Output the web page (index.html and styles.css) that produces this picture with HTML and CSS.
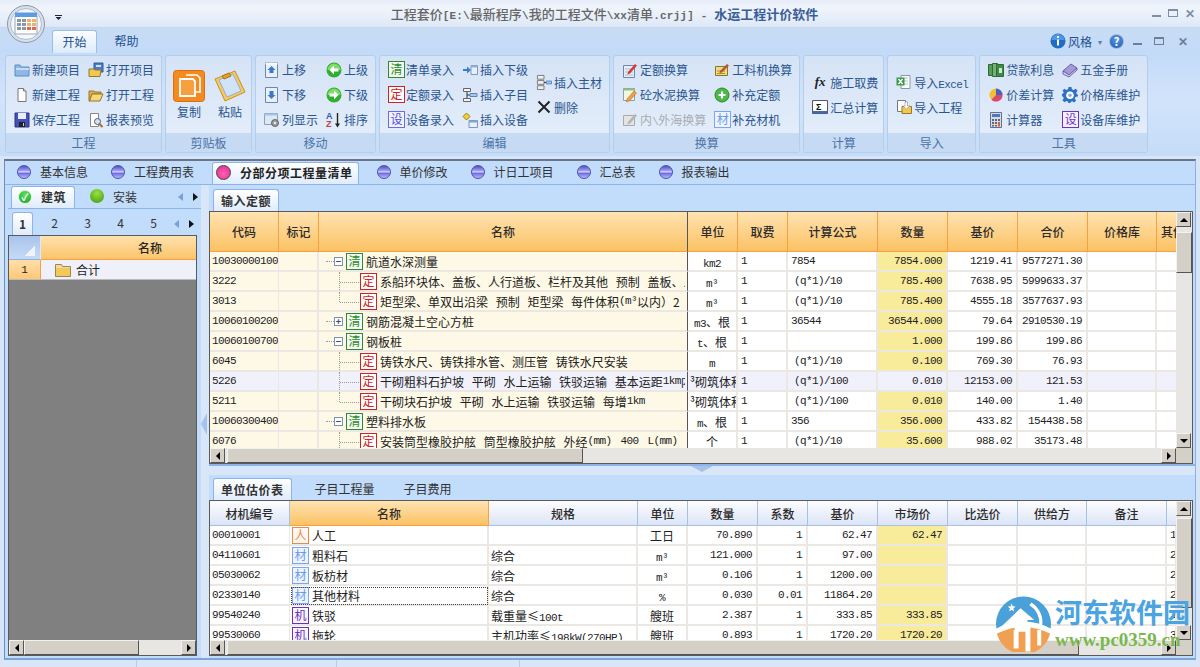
FILE: index.html
```html
<!DOCTYPE html>
<html lang="zh-CN">
<head>
    <meta charset="UTF-8">
    <title>水运工程计价软件</title>
    <link rel="stylesheet" href="styles.css">
</head>
<body>
<svg class="icon-defs" aria-hidden="true">
    <symbol id="i-folder" viewBox="0 0 16 16"><path d="M1 3h5l1 2h8v9H1z" fill="#8fb8e6" stroke="#5f8cc0"/><path d="M2 6h13v2H2z" fill="#c4dcf6"/></symbol>
    <symbol id="i-doc" viewBox="0 0 16 16"><path d="M4 1.500h5.500l2.500 2.500v10.500H4z" fill="#fff" stroke="#777"/><path d="M9.500 1.500V4H12" fill="#ddd" stroke="#777"/></symbol>
    <symbol id="i-save" viewBox="0 0 16 16"><path d="M1 1h14v14H1z" fill="#4450b8" stroke="#2c3488"/><path d="M4 1h8v6H4z" fill="#e8ecff"/><path d="M5 10h6v5H5z" fill="#222"/><path d="M9 11h1v3H9z" fill="#ccc"/></symbol>
    <symbol id="i-open" viewBox="0 0 16 16"><path d="M6 1h9v9H6z" fill="#4a7cc8" stroke="#2f5a9c"/><path d="M8 3h5v2H8z" fill="#cfe0f6"/><path d="M1 7h5l1 1h6l-1 6.500H1z" fill="#f2c850" stroke="#96782a"/></symbol>
    <symbol id="i-openf" viewBox="0 0 16 16"><path d="M1 4h5l1 1h6v2H4l-2 7H1z" fill="#d8b050" stroke="#96782a"/><path d="M4 7h11l-3 7H1.500z" fill="#f6d878" stroke="#96782a"/></symbol>
    <symbol id="i-preview" viewBox="0 0 16 16"><path d="M2.500 1.500h8v13h-8z" fill="#fff" stroke="#888"/><circle cx="9.500" cy="9.500" r="3" fill="#cfe4f8" stroke="#557"/><path d="M11.500 12l3 3" stroke="#a07030" stroke-width="2"/></symbol>
    <symbol id="i-up" viewBox="0 0 16 16"><path d="M1.500 .5h12v15h-12z" fill="#e8f0fb" stroke="#6c88b0"/><path d="M1.500 .5h12v2h-12z" fill="#fff"/><path d="M7.500 4l4 4H9.500v3h-4V8h-2z" fill="#3c78cc"/></symbol>
    <symbol id="i-down" viewBox="0 0 16 16"><path d="M1.500 .5h12v15h-12z" fill="#e8f0fb" stroke="#6c88b0"/><path d="M5.500 4h4v4h2l-4 4-4-4h2z" fill="#3c78cc"/></symbol>
    <symbol id="i-cols" viewBox="0 0 16 16"><path d="M.5 1.500h13v11H.5z" fill="#dce8f6" stroke="#88a0c0"/><path d="M.5 1.500h13v2H.5z" fill="#a8c4e8"/><circle cx="11" cy="11" r="3.500" fill="#999" stroke="#666"/><circle cx="11" cy="11" r="1.200" fill="#eee"/></symbol>
    <symbol id="i-left" viewBox="0 0 16 16"><circle cx="8" cy="8" r="7.500" fill="#2fae2f"/><path d="M1.500 8a6.500 6.500 0 0 1 13 0z" fill="#7fdc6a"/><path d="M3.500 8l4.500-4.500V6.500h4.500v3H8v3z" fill="#fff"/></symbol>
    <symbol id="i-right" viewBox="0 0 16 16"><circle cx="8" cy="8" r="7.500" fill="#2fae2f"/><path d="M1.500 8a6.500 6.500 0 0 1 13 0z" fill="#7fdc6a"/><path d="M12.500 8L8 3.500V6.500H3.500v3H8v3z" fill="#fff"/></symbol>
    <symbol id="i-sort" viewBox="0 0 16 16"><text x="0" y="7" class="svg-tx" fill="#3060b0">A</text><text x="0" y="15" class="svg-tx" fill="#c04040">Z</text><path d="M11.500 1v12" stroke="#222" stroke-width="1.400"/><path d="M9 11.500h5L11.500 15.500z" fill="#222"/></symbol>
    <symbol id="i-insnext" viewBox="0 0 16 16"><path d="M9 3.500h6.500v9H9z" fill="#e8f0fb" stroke="#7d97bd"/><path d="M9 3.500h6.500v2H9z" fill="#8fb0e0"/><path d="M1 7h4V4.500L9 8l-4 3.500V9H1z" fill="#3f7ad0"/></symbol>
    <symbol id="i-inschild" viewBox="0 0 16 16"><path d="M1.500 1.500h7v3h-7zM1.500 11.500h7v3h-7z" fill="#f4f4f4" stroke="#666"/><path d="M5 5v6M5 8h3" stroke="#333"/><path d="M8 6.500h7v3H8z" fill="#a8c8f0" stroke="#5a84c0"/></symbol>
    <symbol id="i-insdev" viewBox="0 0 16 16"><path d="M4.500 1l3.500 3.500L4.500 8 1 4.500z" fill="#f4cf30" stroke="#a08010"/><path d="M7 8.500h8.500v7H7z" fill="#e8f0fb" stroke="#7d97bd"/><path d="M7 8.500h8.500v2H7z" fill="#7fa4da"/></symbol>
    <symbol id="i-insmain" viewBox="0 0 17 17"><path d="M1.500 1.500h7v4h-7zM1.500 7h7v4h-7zM1.500 12.500h7v4h-7z" fill="#f0f0f0" stroke="#777"/><path d="M8.500 9h3" stroke="#333"/><path d="M11 7.500h5.500v3H11z" fill="#a8c8f0" stroke="#5a84c0"/></symbol>
    <symbol id="i-del" viewBox="0 0 16 16"><path d="M2.500 2.500l11 11M13.500 2.500l-11 11" stroke="#222" stroke-width="2"/></symbol>
    <symbol id="i-quota" viewBox="0 0 16 16"><path d="M1.500 3.500h11v12h-11z" fill="#e6eefa" stroke="#6f86ab"/><path d="M3 7h8M3 10h8M3 13h8" stroke="#a8bcd8"/><path d="M6 10l7-8 2 1.500-7 8-2.500 1z" fill="#d83830"/></symbol>
    <symbol id="i-cement" viewBox="0 0 16 16"><path d="M1.500 1.500h11v12h-11z" fill="#f4f6e4" stroke="#88a0b8"/><path d="M1.500 1.500h11v2h-11z" fill="#8fc080"/><path d="M5 12l7-8 2.500 2-7 8-3 1z" fill="#f0a040" stroke="#a86818" stroke-width=".5"/></symbol>
    <symbol id="i-sea" viewBox="0 0 16 16"><path d="M1.500 3.500h11v10h-11z" fill="#e4e4e4" stroke="#aaa"/><path d="M6 10l7-8 2 1.500-7 8-2.500 1z" fill="#b4b4b4"/></symbol>
    <symbol id="i-labor" viewBox="0 0 16 16"><path d="M1.500 4.500h12v9h-12z" fill="#f0dc80" stroke="#8a7428"/><path d="M3 9h8M3 11.500h8" stroke="#a89040"/><path d="M6 9l7-7 2 1.500-7 7-2.500.5z" fill="#b85830"/></symbol>
    <symbol id="i-add" viewBox="0 0 16 16"><circle cx="8" cy="8" r="7" fill="#4cb848" stroke="#2a8a2a"/><path d="M8 4.500v7M4.500 8h7" stroke="#fff" stroke-width="2.200"/></symbol>
    <symbol id="i-sum" viewBox="0 0 16 16"><path d="M.5 1.500h15v13H.5z" fill="#fff" stroke="#556"/><path d="M.5 12h15v2.500H.5z" fill="#4468b8"/><text x="4" y="11" class="svg-tx" fill="#111">&#931;</text></symbol>
    <symbol id="i-excel" viewBox="0 0 16 16"><path d="M5 1.500h9v13H5z" fill="#fff" stroke="#8898a8"/><path d="M7 4h5M7 7h5M7 10h5" stroke="#b0c0d0"/><path d="M.5 3.500h8v8h-8z" fill="#3a9a48"/><path d="M2.500 5l4 5M6.500 5l-4 5" stroke="#fff" stroke-width="1.300"/></symbol>
    <symbol id="i-import" viewBox="0 0 16 16"><path d="M1.500 1.500h8v11h-8z" fill="#fff" stroke="#777"/><path d="M6 7.500h9.500v7H6z" fill="#f2c850" stroke="#96782a"/><path d="M9 3h2.500v4H14l-3.500 3L7 7h2z" fill="#fff" stroke="#777" stroke-width=".5"/></symbol>
    <symbol id="i-loan" viewBox="0 0 16 16"><path d="M.5 2.500h5v11h-5z" fill="#5a9a60" stroke="#2e6a38"/><path d="M4.500 1.500h5v13h-5z" fill="#78b070" stroke="#2e6a38"/><path d="M8.500 2.500h7v12h-7z" fill="#3e8a4a" stroke="#2e6a38"/><path d="M11 6h3v5h-3z" fill="#cfe8c8"/></symbol>
    <symbol id="i-book" viewBox="0 0 16 16"><path d="M1 9l8-7 6 4-8 7z" fill="#a49ad8" stroke="#6a5ea8"/><path d="M1 9v3l6 3 8-7V6l-8 7z" fill="#ddd8f4" stroke="#6a5ea8"/></symbol>
    <symbol id="i-pie" viewBox="0 0 16 16"><circle cx="8" cy="8" r="6.500" fill="#f0c030"/><path d="M8 8V1.500A6.500 6.500 0 0 1 14.500 8z" fill="#4a60c0"/><path d="M8 8h6.500A6.500 6.500 0 0 1 3.500 12.700z" fill="#d84870"/></symbol>
    <symbol id="i-gear" viewBox="0 0 16 16"><path d="M6.500 0h3l.4 2.300 1.800.8L13.600 1.700l2 2-1.400 1.900.8 1.800L17 8l-1.500 1.600-2 .3-.8 1.800 1.400 1.900-2 2-1.900-1.400-1.800.8L9.500 17h-3l-.4-2.300-1.800-.8-1.900 1.400-2-2 1.400-1.900-.8-1.800L-1 9V7l2-.3.800-1.800L.4 3.700l2-2 1.900 1.400 1.800-.8z" fill="#2c70c8"/><circle cx="8" cy="8.300" r="3.800" fill="#fff"/><circle cx="8" cy="8.300" r="1.800" fill="#7fb0e8"/></symbol>
    <symbol id="i-calc" viewBox="0 0 16 16"><path d="M2.500 .5h11v15h-11z" fill="#d4dce8" stroke="#66728a"/><path d="M4 2h8v3H4z" fill="#5078c0"/><path d="M4 7h2v2H4zM7 7h2v2H7zM10 7h2v2h-2zM4 10h2v2H4zM7 10h2v2H7zM4 13h2v1.500H4zM7 13h2v1.500H7z" fill="#667"/><path d="M10 10h2v4.500h-2z" fill="#d86040"/></symbol>
    <symbol id="i-info" viewBox="0 0 16 16"><circle cx="8" cy="8" r="7.500" fill="#1f6cc4"/><path d="M1.500 7a6.500 6 0 0 1 13 0z" fill="#4f97e4"/><path d="M7 3h2v2H7zM7 6.500h2v6H7z" fill="#fff"/></symbol>
    <symbol id="i-folder-y" viewBox="0 0 16 16"><path d="M.5 2.500h6l1 2h8v10H.5z" fill="#f4dc98" stroke="#99855a"/><path d="M1 6h14v8H1z" fill="#f2c858"/></symbol>
    <symbol id="i-copy" viewBox="0 0 32 32"><rect x=".5" y=".5" width="31" height="31" rx="3" fill="#f58a20" stroke="#d87010"/><path d="M13 5h11l3 3v14h-4" fill="none" stroke="#fff" stroke-width="1.600"/><path d="M7 9h13l2 2v15H7z" fill="#f8a040" stroke="#fff" stroke-width="1.800"/></symbol>
    <symbol id="i-paste" viewBox="0 0 32 32"><path d="M1 9L21 1l10 21-20 9z" fill="#f6c860" stroke="#c89020"/><path d="M5 10l14-6 8 17-14 6z" fill="#cfe4fa" stroke="#8fb0d8"/><path d="M8 6l7-3 2 3-7 3z" fill="#e8a030" stroke="#a87010"/></symbol>
    <symbol id="i-logo" viewBox="0 0 38 38"><circle cx="19" cy="19" r="18.500" fill="#d8e0ec" stroke="#8c98a8"/><circle cx="19" cy="19" r="15.500" fill="#f4f7fc" stroke="#b0bccc"/><path d="M8 11h22v18H8z" fill="#fff" stroke="#9aa6b8"/><path d="M8 7.500h22V12H8z" fill="#5f9be0"/><path d="M10 14h4v3h-4zM15 14h4v3h-4zM10 18h4v3h-4zM15 18h4v3h-4zM10 22h4v3h-4zM15 22h4v3h-4z" fill="#8a98a8"/><path d="M20 14h4v3h-4zM25 14h4v3h-4zM20 18h4v3h-4zM25 18h4v3h-4z" fill="#f0b070"/><path d="M20 22h4v3h-4zM25 22h4v3h-4z" fill="#e06850"/></symbol>
</svg>

<div class="window">
    <svg class="app-logo"><use href="#i-logo"/></svg>

    <div class="titlebar">
        <span class="qat-arrow"></span>
        <div class="title">工程套价<span class="lat">[E:\</span>最新程序<span class="lat">\</span>我的工程文件<span class="lat">\xx</span>清单<span class="lat">.crjj] - </span><b>水运工程计价软件</b></div>
        <div class="win-btns"><span class="wb-min"></span><span class="wb-max"></span><span class="wb-close">&#10005;</span></div>
    </div>

    <div class="rib-tabs">
        <span class="rib-tab active">开始</span>
        <span class="rib-tab">帮助</span>
        <div class="rib-right">
            <svg class="ic"><use href="#i-info"/></svg>
            <span>风格</span><span class="small-caret">&#9662;</span>
            <span class="help-btn">?</span>
            <span class="wb-min"></span><span class="wb-rest"></span><span class="wb-close">&#10005;</span>
        </div>
    </div>

    <div class="ribbon">
        <section class="rgroup">
            <div class="rbody">
                <div class="rcol">
                    <div class="ritem"><svg class="ic"><use href="#i-folder"/></svg>新建项目</div>
                    <div class="ritem"><svg class="ic"><use href="#i-doc"/></svg>新建工程</div>
                    <div class="ritem"><svg class="ic"><use href="#i-save"/></svg>保存工程</div>
                </div>
                <div class="rcol">
                    <div class="ritem"><svg class="ic"><use href="#i-open"/></svg>打开项目</div>
                    <div class="ritem"><svg class="ic"><use href="#i-openf"/></svg>打开工程</div>
                    <div class="ritem"><svg class="ic"><use href="#i-preview"/></svg>报表预览</div>
                </div>
            </div>
            <div class="rcap">工程</div>
        </section>
        <section class="rgroup">
            <div class="rbody big">
                <div class="bigbtn"><svg class="ic32"><use href="#i-copy"/></svg>复制</div>
                <div class="bigbtn"><svg class="ic32"><use href="#i-paste"/></svg>粘贴</div>
            </div>
            <div class="rcap">剪贴板</div>
        </section>
        <section class="rgroup">
            <div class="rbody">
                <div class="rcol">
                    <div class="ritem"><svg class="ic"><use href="#i-up"/></svg>上移</div>
                    <div class="ritem"><svg class="ic"><use href="#i-down"/></svg>下移</div>
                    <div class="ritem"><svg class="ic"><use href="#i-cols"/></svg>列显示</div>
                </div>
                <div class="rcol">
                    <div class="ritem"><svg class="ic"><use href="#i-left"/></svg>上级</div>
                    <div class="ritem"><svg class="ic"><use href="#i-right"/></svg>下级</div>
                    <div class="ritem"><svg class="ic"><use href="#i-sort"/></svg>排序</div>
                </div>
            </div>
            <div class="rcap">移动</div>
        </section>
        <section class="rgroup">
            <div class="rbody">
                <div class="rcol">
                    <div class="ritem"><span class="tag qing">清</span>清单录入</div>
                    <div class="ritem"><span class="tag ding">定</span>定额录入</div>
                    <div class="ritem"><span class="tag she">设</span>设备录入</div>
                </div>
                <div class="rcol">
                    <div class="ritem"><svg class="ic"><use href="#i-insnext"/></svg>插入下级</div>
                    <div class="ritem"><svg class="ic"><use href="#i-inschild"/></svg>插入子目</div>
                    <div class="ritem"><svg class="ic"><use href="#i-insdev"/></svg>插入设备</div>
                </div>
                <div class="rcol">
                    <div class="ritem"><svg class="ic"><use href="#i-insmain"/></svg>插入主材</div>
                    <div class="ritem"><svg class="ic"><use href="#i-del"/></svg>删除</div>
                </div>
            </div>
            <div class="rcap">编辑</div>
        </section>
        <section class="rgroup">
            <div class="rbody">
                <div class="rcol">
                    <div class="ritem"><svg class="ic"><use href="#i-quota"/></svg>定额换算</div>
                    <div class="ritem"><svg class="ic"><use href="#i-cement"/></svg>砼水泥换算</div>
                    <div class="ritem off"><svg class="ic"><use href="#i-sea"/></svg><span>内<span class="lat">\</span>外海换算</span></div>
                </div>
                <div class="rcol">
                    <div class="ritem"><svg class="ic"><use href="#i-labor"/></svg>工料机换算</div>
                    <div class="ritem"><svg class="ic"><use href="#i-add"/></svg>补充定额</div>
                    <div class="ritem"><span class="tag cai">材</span>补充材机</div>
                </div>
            </div>
            <div class="rcap">换算</div>
        </section>
        <section class="rgroup">
            <div class="rbody narrow">
                <div class="rcol">
                    <div class="ritem"><i class="fx">fx</i>施工取费</div>
                    <div class="ritem"><svg class="ic"><use href="#i-sum"/></svg>汇总计算</div>
                </div>
            </div>
            <div class="rcap">计算</div>
        </section>
        <section class="rgroup">
            <div class="rbody">
                <div class="rcol">
                    <div class="ritem"><svg class="ic"><use href="#i-excel"/></svg><span>导入<span class="lat">Excel</span></span></div>
                    <div class="ritem"><svg class="ic"><use href="#i-import"/></svg>导入工程</div>
                </div>
            </div>
            <div class="rcap">导入</div>
        </section>
        <section class="rgroup">
            <div class="rbody">
                <div class="rcol">
                    <div class="ritem"><svg class="ic"><use href="#i-loan"/></svg>贷款利息</div>
                    <div class="ritem"><svg class="ic"><use href="#i-pie"/></svg>价差计算</div>
                    <div class="ritem"><svg class="ic"><use href="#i-calc"/></svg>计算器</div>
                </div>
                <div class="rcol">
                    <div class="ritem"><svg class="ic"><use href="#i-book"/></svg>五金手册</div>
                    <div class="ritem"><svg class="ic"><use href="#i-gear"/></svg>价格库维护</div>
                    <div class="ritem"><span class="tag she2">设</span>设备库维护</div>
                </div>
            </div>
            <div class="rcap">工具</div>
        </section>
    </div>

    <div class="work">
        <div class="main-tabs">
            <span class="mtab"><i class="dot"></i>基本信息</span>
            <span class="mtab"><i class="dot"></i>工程费用表</span>
            <span class="mtab active"><i class="dot pink"></i>分部分项工程量清单</span>
            <span class="mtab"><i class="dot"></i>单价修改</span>
            <span class="mtab"><i class="dot"></i>计日工项目</span>
            <span class="mtab"><i class="dot"></i>汇总表</span>
            <span class="mtab"><i class="dot"></i>报表输出</span>
        </div>
        <div class="work-body">
            <aside class="side">
                <div class="side-tabs">
                    <span class="stab active"><i class="ball check">&#10003;</i>建筑</span>
                    <span class="stab"><i class="ball"></i>安装</span>
                    <span class="tab-arrows"><i class="ta-left"></i><i class="ta-right"></i></span>
                </div>
                <div class="num-tabs">
                    <span class="ntab active">1</span>
                    <span class="ntab">2</span>
                    <span class="ntab">3</span>
                    <span class="ntab">4</span>
                    <span class="ntab">5</span>
                    <span class="tab-arrows"><i class="ta-left"></i><i class="ta-right"></i></span>
                </div>
                <div class="grid-frame side-frame">
                    <div class="grid-scroll">
                        <table class="side-table">
                            <tr><th class="corner-cell"><i></i></th><th class="side-name">名称</th></tr>
                            <tr><td class="rownum">1</td><td class="side-row"><div class="folder-row"><svg class="ic"><use href="#i-folder-y"/></svg>合计</div></td></tr>
                        </table>
                    </div>
                    <div class="hbar">
                        <span class="sb-btn"><i class="ar-l"></i></span>
                        <span class="sb-thumb side-thumb"></span>
                        <span class="sb-track"></span>
                        <span class="sb-btn"><i class="ar-r"></i></span>
                    </div>
                </div>
            </aside>

            <div class="split-v"><i class="split-arrow"></i></div>

            <main class="content">
                <div class="sub-tabs"><span class="ptab active">输入定额</span></div>
                <div class="grid-frame top-frame">
                    <div class="grid-scroll">
                        <table class="grid top-grid">
                            <colgroup>
                                <col class="c69"><col class="c40"><col class="c369"><col class="c50"><col class="c50"><col class="c90"><col class="c70"><col class="c70"><col class="c70"><col class="c69"><col class="c40">
                            </colgroup>
                            <tr>
                                <th>代码</th><th>标记</th><th class="frozen">名称</th><th>单位</th><th>取费</th><th>计算公式</th><th>数量</th><th>基价</th><th>合价</th><th>价格库</th><th class="cut">其他</th>
                            </tr>
                            <tr>
                                <td class="fz code">10030000100</td><td class="fz"></td>
                                <td class="fz frozen"><div class="tree"><i class="stub"></i><i class="exp">&#8722;</i><span class="tag qing">清</span>航道水深测量</div></td>
                                <td class="ctr"><span class="lat">km2</span></td><td class="mono">1</td><td class="mono fm0">7854</td><td class="qty">7854.000</td><td class="num">1219.41</td><td class="num">9577271.30</td><td></td><td></td>
                            </tr>
                            <tr>
                                <td class="fz code">3222</td><td class="fz"></td>
                                <td class="fz frozen"><div class="tree child"><i class="branch"></i><span class="tag ding">定</span>系船环块体、盖板、人行道板、栏杆及其他 预制 盖板、人行道板</div></td>
                                <td class="ctr"><span class="lat">m³</span></td><td class="mono">1</td><td class="mono fm">(q*1)/10</td><td class="qty">785.400</td><td class="num">7638.95</td><td class="num">5999633.37</td><td></td><td></td>
                            </tr>
                            <tr>
                                <td class="fz code">3013</td><td class="fz"></td>
                                <td class="fz frozen"><div class="tree child"><i class="branch last"></i><span class="tag ding">定</span>矩型梁、单双出沿梁 预制 矩型梁 每件体积<span class="lat">(m³</span>以内）2</div></td>
                                <td class="ctr"><span class="lat">m³</span></td><td class="mono">1</td><td class="mono fm">(q*1)/10</td><td class="qty">785.400</td><td class="num">4555.18</td><td class="num">3577637.93</td><td></td><td></td>
                            </tr>
                            <tr>
                                <td class="fz code">10060100200</td><td class="fz"></td>
                                <td class="fz frozen"><div class="tree"><i class="stub"></i><i class="exp">+</i><span class="tag qing">清</span>钢筋混凝土空心方桩</div></td>
                                <td class="ctr"><span class="lat">m3</span>、根</td><td class="mono">1</td><td class="mono fm0">36544</td><td class="qty">36544.000</td><td class="num">79.64</td><td class="num">2910530.19</td><td></td><td></td>
                            </tr>
                            <tr>
                                <td class="fz code">10060100700</td><td class="fz"></td>
                                <td class="fz frozen"><div class="tree"><i class="stub"></i><i class="exp">&#8722;</i><span class="tag qing">清</span>钢板桩</div></td>
                                <td class="ctr"><span class="lat">t</span>、根</td><td class="mono">1</td><td></td><td class="qty">1.000</td><td class="num">199.86</td><td class="num">199.86</td><td></td><td></td>
                            </tr>
                            <tr>
                                <td class="fz code">6045</td><td class="fz"></td>
                                <td class="fz frozen"><div class="tree child"><i class="branch"></i><span class="tag ding">定</span>铸铁水尺、铸铁排水管、测压管 铸铁水尺安装</div></td>
                                <td class="ctr"><span class="lat">m</span></td><td class="mono">1</td><td class="mono fm">(q*1)/10</td><td class="qty">0.100</td><td class="num">769.30</td><td class="num">76.93</td><td></td><td></td>
                            </tr>
                            <tr class="sel">
                                <td class="code">5226</td><td></td>
                                <td class="frozen"><div class="tree child"><i class="branch"></i><span class="tag ding">定</span>干砌粗料石护坡 平砌 水上运输 铁驳运输 基本运距<span class="lat">1km</span>内</div></td>
                                <td class="clip">³砌筑体积</td><td class="mono">1</td><td class="mono fm">(q*1)/100</td><td class="num">0.010</td><td class="num">12153.00</td><td class="num">121.53</td><td></td><td></td>
                            </tr>
                            <tr>
                                <td class="fz code">5211</td><td class="fz"></td>
                                <td class="fz frozen"><div class="tree child"><i class="branch last"></i><span class="tag ding">定</span>干砌块石护坡 平砌 水上运输 铁驳运输 每增<span class="lat">1km</span></div></td>
                                <td class="clip">³砌筑体积</td><td class="mono">1</td><td class="mono fm">(q*1)/100</td><td class="qty">0.010</td><td class="num">140.00</td><td class="num">1.40</td><td></td><td></td>
                            </tr>
                            <tr>
                                <td class="fz code">10060300400</td><td class="fz"></td>
                                <td class="fz frozen"><div class="tree"><i class="stub"></i><i class="exp">&#8722;</i><span class="tag qing">清</span>塑料排水板</div></td>
                                <td class="ctr"><span class="lat">m</span>、根</td><td class="mono">1</td><td class="mono fm0">356</td><td class="qty">356.000</td><td class="num">433.82</td><td class="num">154438.58</td><td></td><td></td>
                            </tr>
                            <tr>
                                <td class="fz code">6076</td><td class="fz"></td>
                                <td class="fz frozen"><div class="tree child"><i class="branch"></i><span class="tag ding">定</span>安装筒型橡胶护舷 筒型橡胶护舷 外经<span class="lat">(mm) 400 L(mm) 2000</span></div></td>
                                <td class="ctr">个</td><td class="mono">1</td><td class="mono fm">(q*1)/10</td><td class="qty">35.600</td><td class="num">988.02</td><td class="num">35173.48</td><td></td><td></td>
                            </tr>
                        </table>
                    </div>
                    <div class="vbar">
                        <span class="sb-btn"><i class="ar-u"></i></span>
                        <span class="sb-thumb top-vthumb"></span>
                        <span class="sb-track"></span>
                        <span class="sb-btn"><i class="ar-d"></i></span>
                    </div>
                    <div class="hbar">
                        <span class="sb-btn"><i class="ar-l"></i></span>
                        <span class="sb-thumb top-hthumb"></span>
                        <span class="sb-track"></span>
                        <span class="sb-btn"><i class="ar-r"></i></span>
                    </div>
                    <div class="sb-corner"></div>
                </div>

                <div class="split-h"><i class="split-arrow-h"></i></div>

                <div class="sub-tabs lower"><span class="ptab active">单位估价表</span><span class="ptab">子目工程量</span><span class="ptab">子目费用</span></div>
                <div class="grid-frame low-frame">
                    <div class="grid-scroll">
                        <table class="grid low-grid">
                            <colgroup>
                                <col class="c80"><col class="c199"><col class="c149"><col class="c50"><col class="c70"><col class="c50"><col class="c70"><col class="c70"><col class="c70"><col class="c69"><col class="c80"><col class="c10">
                            </colgroup>
                            <tr>
                                <th>材机编号</th><th class="hl">名称</th><th>规格</th><th>单位</th><th>数量</th><th>系数</th><th>基价</th><th>市场价</th><th>比选价</th><th>供给方</th><th>备注</th><th></th>
                            </tr>
                            <tr>
                                <td class="code">00010001</td><td><div class="mat"><span class="tag ren">人</span>人工</div></td><td></td><td class="ctr">工日</td><td class="num">70.890</td><td class="num">1</td><td class="num">62.47</td><td class="qty">62.47</td><td></td><td></td><td></td><td class="mono">1</td>
                            </tr>
                            <tr>
                                <td class="code">04110601</td><td><div class="mat"><span class="tag cai">材</span>粗料石</div></td><td>综合</td><td class="ctr"><span class="lat">m³</span></td><td class="num">121.000</td><td class="num">1</td><td class="num">97.00</td><td class="qty"></td><td></td><td></td><td></td><td class="mono">2</td>
                            </tr>
                            <tr>
                                <td class="code">05030062</td><td><div class="mat"><span class="tag cai">材</span>板枋材</div></td><td>综合</td><td class="ctr"><span class="lat">m³</span></td><td class="num">0.106</td><td class="num">1</td><td class="num">1200.00</td><td class="qty"></td><td></td><td></td><td></td><td class="mono">2</td>
                            </tr>
                            <tr>
                                <td class="code">02330140</td><td class="focus"><div class="mat"><span class="tag cai">材</span>其他材料</div></td><td>综合</td><td class="ctr"><span class="lat">%</span></td><td class="num">0.030</td><td class="num">0.01</td><td class="num">11864.20</td><td class="qty"></td><td></td><td></td><td></td><td class="mono">2</td>
                            </tr>
                            <tr>
                                <td class="code">99540240</td><td><div class="mat"><span class="tag ji">机</span>铁驳</div></td><td>载重量≤<span class="lat">100t</span></td><td class="ctr">艘班</td><td class="num">2.387</td><td class="num">1</td><td class="num">333.85</td><td class="qty">333.85</td><td></td><td></td><td></td><td class="mono">3</td>
                            </tr>
                            <tr>
                                <td class="code">99530060</td><td><div class="mat"><span class="tag ji">机</span>拖轮</div></td><td>主机功率≤<span class="lat">198kW(270HP)</span></td><td class="ctr">艘班</td><td class="num">0.893</td><td class="num">1</td><td class="num">1720.20</td><td class="qty">1720.20</td><td></td><td></td><td></td><td class="mono">3</td>
                            </tr>
                        </table>
                    </div>
                    <div class="vbar">
                        <span class="sb-btn"><i class="ar-u"></i></span>
                        <span class="sb-thumb low-vthumb"></span>
                        <span class="sb-track"></span>
                        <span class="sb-btn"><i class="ar-d"></i></span>
                    </div>
                    <div class="hbar">
                        <span class="sb-btn"><i class="ar-l"></i></span>
                        <span class="sb-thumb low-hthumb"></span>
                        <span class="sb-track"></span>
                        <span class="sb-btn"><i class="ar-r"></i></span>
                    </div>
                    <div class="sb-corner"></div>
                </div>
            </main>
        </div>
    </div>

    <div class="statusbar"><span class="st1"></span><span class="st2"></span><span class="st3"></span></div>

    <!-- 水印 -->
    <div class="watermark">
        <svg class="wm-logo" viewBox="0 0 58 56">
            <circle cx="29" cy="28" r="28" fill="#4aa0d8"/>
            <path d="M1.500 36A28 28 0 0 0 56.500 36Q29 20 1.500 36z" fill="#f0a050"/>
            <path d="M.5 33Q29 18 57.500 33L56.500 38Q29 24 1.500 38z" fill="#fff"/>
            <path d="M19 34h5v19h-5zM31 31h5v25h-5zM43 34h4v16h-4z" fill="#fff"/>
            <path d="M6 31L26 12l14 12h-7v12H20V27z" fill="#fff"/>
            <path d="M37 6a24 24 0 0 1 11 24l-3-1.500A20 20 0 0 0 35 9z" fill="#fff"/>
            <path d="M17 7l1 3 3 .3-2.300 2 .8 3L17 13.500 14.400 15.300l.8-3-2.200-2 3-.3z" fill="#fff"/>
        </svg>
        <div class="wm-text">
            <div class="wm-cn">河东软件园</div>
            <div class="wm-url">www.pc0359.cn</div>
        </div>
    </div>
</div>
</body>
</html>
```

FILE: styles.css
```css
* {
    box-sizing: border-box;
}

body {
    margin: 0;
    overflow: hidden;
    font-family: "Noto Sans CJK SC", sans-serif;
    font-size: 12px;
    color: #222;
}

.icon-defs {
    display: none;
}

.svg-tx {
    font-family: "Liberation Sans", sans-serif;
    font-size: 9px;
    font-weight: bold;
}

.lat {
    font-family: "Liberation Mono", monospace;
    font-size: 11px;
    letter-spacing: -0.6px;
    word-spacing: 3px;
}

.window {
    position: relative;
    width: 1200px;
    height: 667px;
    display: flex;
    flex-direction: column;
    background-color: #d6e6f8;
    overflow: hidden;
}

.app-logo {
    position: absolute;
    z-index: 2;
    left: 7px;
    top: 5px;
    width: 38px;
    height: 38px;
}

/* 标题栏 */
.titlebar {
    height: 28px;
    flex: none;
    display: flex;
    align-items: center;
    justify-content: center;
    position: relative;
    padding-left: 9px;
    background: linear-gradient(#e6edf8, #f0f5fc 30%, #dde8f7);
    border-bottom: 1px solid #c4d8f0;
}

.title {
    font-size: 13px;
    font-weight: 500;
    color: #666;
    white-space: nowrap;
}

.title .lat {
    font-size: 11px;
    letter-spacing: .2px;
    word-spacing: 0;
    font-weight: bold;
}

.title b {
    color: #3b5e98;
    font-weight: 700;
}

.qat-arrow {
    position: absolute;
    left: 55px;
    top: 15px;
    width: 7px;
    height: 5px;
    border-top: 1px solid #224;
    background: linear-gradient(to bottom, transparent 1px, #224 1px) no-repeat;
    clip-path: polygon(0 0, 100% 0, 100% 30%, 50% 100%, 0 30%);
}

.win-btns {
    position: absolute;
    right: 5px;
    top: 6px;
    display: flex;
    align-items: center;
    gap: 7px;
    color: #7e8ea6;
}

.wb-min {
    width: 9px;
    height: 7px;
    border-bottom: 2px solid #7e8ea6;
}

.wb-max {
    width: 10px;
    height: 8px;
    border: 1px solid #7e8ea6;
    border-top-width: 2px;
}

.wb-rest {
    width: 10px;
    height: 8px;
    border: 1px solid #6d7f98;
    border-top-width: 2px;
}

.wb-close {
    font-size: 12px;
    font-weight: bold;
    line-height: 14px;
}

/* 功能区标签 */
.rib-tabs {
    height: 25px;
    flex: none;
    display: flex;
    align-items: flex-end;
    padding-left: 52px;
    background: linear-gradient(#c8dcf4, #c3daf8);
    position: relative;
}

.rib-tab {
    width: 45px;
    height: 23px;
    line-height: 22px;
    text-align: center;
    color: #22508f;
    margin-right: 7px;
}

.rib-tab.active {
    background: linear-gradient(#fcfdff, #dcebfb);
    border: 1px solid #9dbde4;
    border-bottom: none;
    border-radius: 3px 3px 0 0;
}

.rib-right {
    position: absolute;
    right: 12px;
    top: 5px;
    display: flex;
    align-items: center;
    gap: 2px;
    color: #22508f;
    height: 16px;
}

.rib-right .wb-min {
    margin-left: 7px;
    margin-right: 10px;
    border-color: #6d7f98;
}

.rib-right .wb-rest {
    margin-right: 12px;
}

.rib-right .wb-close {
    color: #6d7f98;
}

.small-caret {
    font-size: 8px;
    color: #5a7cab;
    margin: 0 5px 0 4px;
}

.help-btn {
    width: 15px;
    height: 15px;
    border-radius: 50%;
    background: radial-gradient(circle at 50% 35%, #5d9ae8, #1b55ad);
    border: 1px solid #a4b8d4;
    color: #fff;
    font-size: 11px;
    font-weight: bold;
    line-height: 13px;
    text-align: center;
}

/* 功能区 */
.ribbon {
    height: 103px;
    flex: none;
    display: flex;
    gap: 3px;
    padding: 2px 5px 3px;
    background: linear-gradient(#c3daf8, #d2e4fb 45%, #c4dcf8);
}

.rgroup {
    display: flex;
    flex-direction: column;
    border: 1px solid #b4cde9;
    border-radius: 3px;
    background: linear-gradient(#d5e3f6, #e6effb);
    overflow: hidden;
}

.rbody {
    flex: 1;
    display: flex;
    gap: 8px;
    padding: 0 7px 0 8px;
    min-height: 0;
}

.rbody.narrow {
    padding-right: 5px;
}

.rbody.big {
    gap: 9px;
    padding: 14px 5px 0 7px;
}

.rcol {
    display: flex;
    flex-direction: column;
    justify-content: center;
}

.ritem {
    height: 25px;
    display: flex;
    align-items: center;
    gap: 2px;
    color: #2a5590;
    white-space: nowrap;
}

.ritem.off {
    color: #a8adb4;
}

.ritem .tag {
    margin-right: -1px;
}

.ic {
    width: 16px;
    height: 16px;
    flex: none;
}

.ic32 {
    width: 32px;
    height: 32px;
    display: block;
    margin-bottom: 1px;
}

.bigbtn {
    display: flex;
    flex-direction: column;
    align-items: center;
    color: #2a5590;
    width: 32px;
}

.rcap {
    height: 19px;
    flex: none;
    line-height: 19px;
    text-align: center;
    color: #4a72a8;
    background: #c6daf3;
}

.fx {
    width: 16px;
    font-family: "Liberation Serif", serif;
    font-size: 13px;
    font-weight: bold;
    color: #222;
    text-align: center;
}

.tag {
    width: 17px;
    height: 17px;
    flex: none;
    margin-right: 3px;
    border: 1px solid;
    font-size: 12px;
    font-style: normal;
    line-height: 14px;
    text-align: center;
    word-spacing: 0;
    background-color: #fff;
}

.qing { color: #2d8a2d; border-color: #2d8a2d; background-color: #f4fbf2; }
.ding { color: #d42020; border-color: #d42020; }
.she { color: #4a4ae8; border-color: #6a6af0; background-color: #f2f2ff; }
.she2 { color: #6a32c8; border-color: #6a32c8; background-color: #f4f0ff; }
.cai { color: #6a9af0; border-color: #7aa4f4; background-color: #eef4ff; }
.ren { color: #f08848; border-color: #f08848; background-color: #fff8f2; }
.ji { color: #6a30c0; border-color: #6a30c0; background-color: #f8f4ff; }

/* 工作区 */
.work {
    flex: 1;
    min-height: 0;
    margin: 3px 4px 0;
    display: flex;
    flex-direction: column;
    border-top: 2px solid #6a7686;
    border-left: 1px solid #6f8fb8;
    border-right: 1px solid #8fb0dc;
    border-bottom: 2px solid #7ea6dc;
    background-color: #c2dcfc;
}

.main-tabs {
    height: 24px;
    flex: none;
    display: flex;
    align-items: flex-end;
    padding-left: 12px;
    border-bottom: 1px solid #8db4ea;
}

.mtab {
    height: 22px;
    display: flex;
    align-items: center;
    padding-bottom: 3px;
    margin-right: 23px;
    color: #333;
    white-space: nowrap;
}

.mtab.active {
    background: linear-gradient(#fff, #dfecfc);
    border: 1px solid #8db4ea;
    border-bottom: none;
    border-radius: 3px 3px 0 0;
    font-weight: bold;
    letter-spacing: .5px;
    padding: 0 5px 3px 3px;
    margin: 0 18px 0 -5px;
    color: #222;
}

.dot {
    width: 14px;
    height: 14px;
    margin-right: 9px;
    border-radius: 50%;
    border: 1px solid #5050b0;
    background: linear-gradient(#5050c8, #a0a0f0 40%, #e8e8ff 50%, #6868e0 58%, #b8b8ff);
    flex: none;
}

.dot.pink {
    width: 15px;
    height: 15px;
    border-color: #444;
    background: radial-gradient(circle at 50% 60%, #ff60b0, #e02890);
}

.work-body {
    flex: 1;
    min-height: 0;
    display: flex;
}

.side {
    width: 196px;
    flex: none;
    padding-left: 3px;
    display: flex;
    flex-direction: column;
    background-color: #c2dcfc;
}

.side-tabs {
    height: 24px;
    flex: none;
    display: flex;
    align-items: flex-end;
    padding-left: 3px;
    border-bottom: 1px solid #8db4ea;
    position: relative;
}

.stab {
    height: 22px;
    display: flex;
    align-items: center;
    padding: 0 8px 2px 6px;
    margin-right: 9px;
    color: #333;
}

.stab.active {
    background: linear-gradient(#fff, #dfecfc);
    border: 1px solid #8db4ea;
    border-bottom: none;
    border-radius: 3px 3px 0 0;
    font-weight: bold;
    letter-spacing: .5px;
}

.ball {
    width: 14px;
    height: 14px;
    margin-right: 9px;
    border-radius: 50%;
    background: radial-gradient(circle at 50% 30%, #9ae040, #3c9a10);
    color: #fff;
    font-size: 10px;
    font-style: normal;
    line-height: 14px;
    text-align: center;
}

.ball.check {
    background: radial-gradient(circle at 50% 30%, #5fe05f, #10a020);
    border: 1px solid #d8f0d8;
    line-height: 12px;
}

.tab-arrows {
    margin-left: auto;
    display: flex;
    align-items: center;
    gap: 10px;
    padding: 0 3px 7px 0;
}

.ta-left {
    border: 4px solid transparent;
    border-right: 5px solid #7aa0d8;
    border-left: none;
}

.ta-right {
    border: 4px solid transparent;
    border-left: 5px solid #111;
    border-right: none;
}

.num-tabs {
    height: 26px;
    flex: none;
    display: flex;
    align-items: flex-end;
    padding-left: 4px;
    margin-right: 4px;
}

.ntab {
    width: 33px;
    height: 23px;
    line-height: 21px;
    text-align: center;
    color: #333;
}

.ntab.active {
    width: 21px;
    margin-right: 5px;
    background: linear-gradient(#fff, #dfecfc);
    border: 1px solid #8db4ea;
    border-bottom: none;
    border-radius: 3px 3px 0 0;
    font-weight: bold;
}

/* 表格框 */
.grid-frame {
    display: grid;
    border: 1px solid #5a5a5a;
    background-color: #808080;
}

.grid-scroll {
    overflow: hidden;
    min-width: 0;
    min-height: 0;
}

.side-frame {
    height: 421px;
    margin-right: 4px;
    grid-template-rows: 1fr 15px;
}

.top-frame {
    height: 253px;
    margin-right: 2px;
    grid-template-columns: 966px 16px;
    grid-template-rows: 1fr 15px;
    background-color: #fff;
}

.low-frame {
    height: 156px;
    margin-right: 2px;
    grid-template-columns: 966px 16px;
    grid-template-rows: 1fr 15px;
    background-color: #fff;
}

/* 滚动条 */
.hbar,
.vbar {
    display: flex;
    background-color: #e8e6e2;
    background-image: radial-gradient(#d6d3cd 30%, transparent 31%);
    background-size: 2px 2px;
}

.vbar {
    flex-direction: column;
    grid-row: 1;
    grid-column: 2;
}

.sb-btn {
    width: 15px;
    height: 15px;
    flex: none;
    display: flex;
    align-items: center;
    justify-content: center;
    background-color: #d4d0c8;
    border: 1px solid;
    border-color: #f4f2ee #555 #555 #f4f2ee;
}

.sb-thumb {
    flex: none;
    background-color: #d4d0c8;
    border: 1px solid;
    border-color: #f4f2ee #555 #555 #f4f2ee;
}

.sb-track {
    flex: 1;
}

.sb-corner {
    background-color: #d4d0c8;
}

.side-thumb { width: 115px; }
.top-hthumb { width: 356px; margin-left: 2px; }
.low-hthumb { width: 852px; margin-left: 2px; }
.top-vthumb { height: 41px; margin-top: 5px; }
.low-vthumb { height: 90px; margin-top: 2px; }

.ar-l { border: 4px solid transparent; border-right: 4px solid #000; border-left: none; }
.ar-r { border: 4px solid transparent; border-left: 4px solid #000; border-right: none; }
.ar-u { border: 4px solid transparent; border-bottom: 4px solid #000; border-top: none; }
.ar-d { border: 4px solid transparent; border-top: 4px solid #000; border-bottom: none; }

/* 左侧列表 */
.side-table {
    width: 100%;
    table-layout: fixed;
    border-collapse: separate;
    border-spacing: 0;
}

.side-table th {
    height: 24px;
    font-weight: 500;
    border-bottom: 1px solid #f9a040;
    background: linear-gradient(#ffe2ae, #fbc46a);
}

.corner-cell {
    width: 32px;
    padding: 0;
    background: linear-gradient(#a8c4ec, #c6daf6) !important;
    border-right: 1px solid #e0e8f4;
    border-bottom-color: #8db4ea !important;
}

.corner-cell i {
    display: block;
    width: 10px;
    height: 10px;
    margin: 7px 0 0 16px;
    background: linear-gradient(135deg, transparent 50%, #f0f4fa 50%);
}

.side-name {
    width: 218px;
}

.rownum {
    height: 20px;
    text-align: center;
    background: linear-gradient(#ffdfa8, #fdc878);
    border-right: 1px solid #f9a040;
    border-bottom: 1px solid #bbb;
    font-family: "Liberation Mono", monospace;
    font-size: 11px;
}

.side-row {
    background-color: #f0f0fb;
    border-bottom: 1px solid #bbb;
    padding: 0;
}

.folder-row {
    display: flex;
    align-items: center;
    gap: 5px;
    padding-left: 14px;
    height: 19px;
}

.split-v {
    width: 8px;
    flex: none;
    display: flex;
    align-items: flex-start;
    background-color: #d8e6f8;
}

.split-arrow {
    margin-top: 228px;
    width: 6px;
    height: 22px;
    background-color: #a4c2ea;
    clip-path: polygon(100% 0, 0 50%, 100% 100%);
}

/* 右侧 */
.content {
    flex: 1;
    min-width: 0;
    display: flex;
    flex-direction: column;
}

.sub-tabs {
    height: 26px;
    flex: none;
    display: flex;
    align-items: flex-end;
    padding-left: 4px;
}

.sub-tabs.lower {
    height: 25px;
}

.ptab {
    height: 22px;
    line-height: 21px;
    padding: 0 7px;
    margin-right: 15px;
    color: #333;
    white-space: nowrap;
}

.ptab.active {
    background: linear-gradient(#fff, #dfecfc);
    border: 1px solid #8db4ea;
    border-bottom: none;
    border-radius: 3px 3px 0 0;
    font-weight: bold;
    letter-spacing: .5px;
    margin-right: 16px;
}

.split-h {
    height: 11px;
    flex: none;
    display: flex;
    justify-content: center;
    background-color: #d8e6f8;
    border-top: 2px solid #8db4ea;
}

.split-arrow-h {
    width: 22px;
    height: 6px;
    background-color: #a4c2ea;
    clip-path: polygon(0 0, 100% 0, 50% 100%);
}

.grid {
    table-layout: fixed;
    border-collapse: separate;
    border-spacing: 0;
    width: 966px;
}

.c10 { width: 10px; }
.c40 { width: 40px; }
.c50 { width: 50px; }
.c69 { width: 69px; }
.c70 { width: 70px; }
.c80 { width: 80px; }
.c90 { width: 90px; }
.c149 { width: 149px; }
.c199 { width: 199px; }
.c369 { width: 369px; }

.grid th {
    font-weight: 500;
    padding: 0;
    white-space: nowrap;
    overflow: hidden;
    color: #2b2b2b;
}

.top-grid th {
    height: 40px;
    background: linear-gradient(#ffe3b2, #fbc264);
    border-right: 1px solid #f9a040;
    border-bottom: 1px solid #f9a040;
}

.low-grid th {
    height: 25px;
    background: linear-gradient(#fdfdff, #dbe4f6);
    border-right: 1px solid #a8c0e2;
    border-bottom: 1px solid #a8c0e2;
}

.low-grid th.hl {
    background: linear-gradient(#ffe3b2, #fbc264);
    border-color: #f9a040;
}

.top-grid th.cut {
    text-align: left;
    padding-left: 4px;
}

.grid td {
    height: 20px;
    padding: 0 2px;
    overflow: hidden;
    white-space: nowrap;
    background-color: #fff;
    border-right: 2px solid #ebe7e2;
    border-bottom: 2px solid #ebe7e2;
    color: #222;
}

.grid td.frozen,
.grid th.frozen {
    border-right: 1px solid #555;
    word-spacing: 5px;
}

.grid td.fz {
    background-color: #fdf9e6;
}

.grid .sel td {
    background-color: #f1f1fc;
}

.grid td.code,
.grid td.num,
.grid td.qty,
.grid td.mono {
    font-family: "Liberation Mono", monospace;
    font-size: 11px;
    letter-spacing: -0.6px;
}

.grid td.code {
    padding: 0 0 0 2px;
    border-right-width: 1px;
}

.grid td.num,
.grid td.qty {
    text-align: right;
    padding-right: 4px;
}

.grid td.qty {
    background-color: #f8eb9a;
}

.grid td.mono {
    padding-left: 3px;
}

.grid td.fm {
    padding-left: 6px;
}

.grid td.ctr {
    text-align: center;
}

.grid td.focus {
    outline: 1px dotted #444;
    outline-offset: -2px;
}

.tree {
    display: flex;
    align-items: center;
    height: 18px;
    padding-left: 5px;
    overflow: hidden;
}

.tree.child {
    padding-left: 18px;
}

.stub {
    width: 8px;
    height: 1px;
    flex: none;
    border-top: 1px dotted #999;
}

.exp {
    width: 9px;
    height: 9px;
    flex: none;
    margin-right: 3px;
    border: 1px solid #7a92b8;
    background-color: #fff;
    color: #33487a;
    font-size: 9px;
    font-style: normal;
    font-weight: bold;
    line-height: 7px;
    text-align: center;
}

.branch {
    width: 21px;
    height: 20px;
    flex: none;
    align-self: flex-start;
    border-left: 1px dotted #999;
}

.branch::before {
    content: "";
    display: block;
    width: 19px;
    height: 10px;
    border-bottom: 1px dotted #999;
}

.branch.last {
    height: 10px;
}

.mat {
    display: flex;
    align-items: center;
    height: 18px;
}

/* 状态栏 */
.statusbar {
    height: 7px;
    flex: none;
    display: flex;
    background-color: #d8e6f8;
}

.statusbar span {
    border-right: 1px solid #b8cee8;
}

.st1 { width: 137px; }
.st2 { width: 200px; }
.st3 { width: 183px; }

/* 水印 */
.watermark {
    position: absolute;
    left: 995px;
    top: 596px;
    display: flex;
    gap: 3px;
    pointer-events: none;
}

.wm-logo {
    width: 57px;
    height: 56px;
    flex: none;
}

.wm-cn {
    font-size: 27px;
    font-weight: 700;
    line-height: 32px;
    color: #4aa4e2;
    white-space: nowrap;
}

.wm-url {
    margin-top: 3px;
    font-family: "Liberation Serif", serif;
    font-size: 19px;
    font-weight: bold;
    line-height: 18px;
    color: #7ab84e;
    white-space: nowrap;
}
```
